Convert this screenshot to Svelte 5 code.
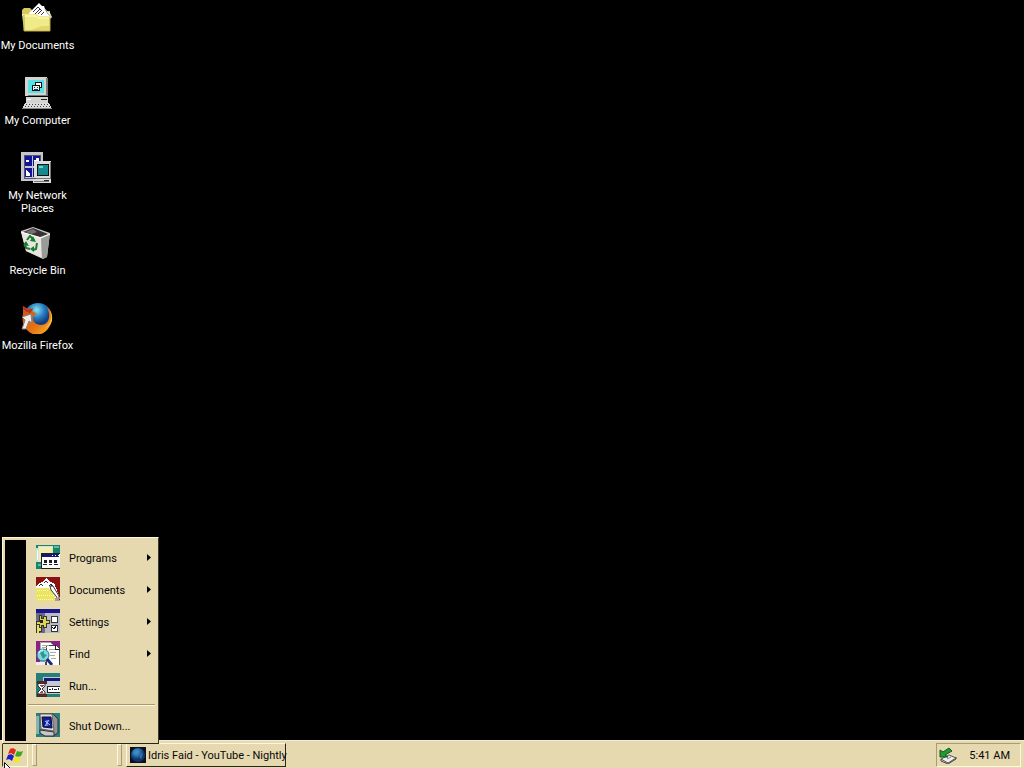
<script>
  const shortcuts = [
    { id: 'docs', lines: ['My Documents'] },
    { id: 'computer', lines: ['My Computer'] },
    { id: 'network', lines: ['My Network', 'Places'] },
    { id: 'bin', lines: ['Recycle Bin'] },
    { id: 'firefox', lines: ['Mozilla Firefox'] }
  ];
  const entries = [
    { id: 'programs', label: 'Programs', sub: true },
    { id: 'documents', label: 'Documents', sub: true },
    { id: 'settings', label: 'Settings', sub: true },
    { id: 'find', label: 'Find', sub: true },
    { id: 'run', label: 'Run...', sub: false },
    { id: 'shutdown', label: 'Shut Down...', sub: false, split: true }
  ];
  let open = $state(true);
</script>

{#snippet desktopIcon(id)}
  <svg class="big" viewBox="0 0 34 32" aria-hidden="true">
    {#if id === 'docs'}
      <path d="M1 12V8l2-2h6l3 3h17v5H1z" fill="#d8c860" />
      <path d="M8 11 18 1l3 3 2 0 1 3 3 3 2 1 2 4-4 4H8z" fill="#fff" />
      <path d="M12 10l5-5 3 3M14 12l5-5M17 12l4-4M20 13l3-3" fill="none" stroke="#334" stroke-width="1" />
      <path d="M24 7l3 5 4 3" fill="none" stroke="#999" />
      <path d="M1 12h15l2 2h11v15H3z" fill="#f0ea88" />
      <path d="M3 14h12l2 2h11" fill="none" stroke="#fffed0" />
      <path d="M3 29V13M3 29h26V15" fill="none" stroke="#b8a84c" />
      <path d="M21 24h7v4H10z" fill="#e4d66a" />
    {:else if id === 'computer'}
      <g shape-rendering="crispEdges">
        <path d="M4 0h22v19H4z" fill="#d4d4ce" /><path d="M25 1h2v18H7v-1h18z" fill="#777" />
        <path d="M7 3h16v13H7z" fill="#57e0e6" />
        <path d="M14 5h7v6h-7z" fill="#fff" /><path d="M14.500 5.500h6v5h-6z" fill="none" stroke="#111" />
        <path d="M11.500 8.500h7v5h-7z" fill="#eee" stroke="#111" />
        <path d="M13 10h1v1h-1zM16 10h1v1h-1zM13 12h4v1h-4z" fill="#173c60" />
        <path d="M5 20h22v6H5z" fill="#d5d5cf" /><path d="M20 22h6v1h-6z" fill="#222" /><path d="M6 22h4v1H6z" fill="#fff" />
        <path d="M4 26h24l3 6H1z" fill="#ddd" />
        <path d="M5 27.500h22M4 29.500h25" stroke="#444" stroke-dasharray="1 2" /><path d="M1 31h30v1H1z" fill="#888" />
      </g>
    {:else if id === 'network'}
      <g shape-rendering="crispEdges">
        <path d="M0 0h22v29H0z" fill="#c7c7cb" /><path d="M3 3h16v23H3z" fill="#c7c7cb" stroke="#556" />
        <path d="M4 4h7v10H4zM12 4h7v10h-7zM4 16h7v9H4zM12 16h7v9h-7z" fill="#10159a" />
        <path d="M5 8h3v2H5zM13 8h2v2h-2zM15 6h3v4h-3zM5 18l4 4v2H5z" fill="#fff" />
        <path d="M13 9h17v17H13z" fill="#ddd" /><path d="M29 10h1v17H15v-1h14z" fill="#777" />
        <path d="M16 12h11v11H16z" fill="#158b91" stroke="#111" /><path d="M18 14h4v2h-4z" fill="#68d5cc" />
        <path d="M12 27h18v4H12z" fill="#ddd" /><path d="M13 29h15" stroke="#777" /><path d="M23 28h5v1h-5z" fill="#222" />
      </g>
    {:else if id === 'bin'}
      <path d="M0 4 12 0l17 6-3 24-4 2-17-8z" fill="#c9c9c5" />
      <path d="M2 5 12 1l15 6-8 3z" fill="#383234" /><path d="M4 5l8-3 4 3-5 2z" fill="#777071" />
      <path d="M0 5l20 6 1 20L5 24z" fill="#e6e5e0" /><path d="M20 11 29 6l-3 24-5 2z" fill="#999b98" />
      <path d="M0 5l20 6 9-4" fill="none" stroke="#fff" />
      <g fill="none" stroke="#187d2b" stroke-width="2"><path d="m6 13 3-4 4 4M4 16l1 5 4 1M16 16l-1 6-3 1" /></g>
      <path d="m12 9 3 6-6-1zM2 18l3-4 3 5zM13 19v6l-4-3z" fill="#187d2b" />
    {:else}
      <defs>
        <radialGradient id="world" cx="45%" cy="25%"><stop offset="0" stop-color="#8ae2f5" /><stop offset=".55" stop-color="#267fc0" /><stop offset="1" stop-color="#123b80" /></radialGradient>
        <linearGradient id="fox" x1="0" y1="0" x2="1" y2="1"><stop offset="0" stop-color="#cf4c12" /><stop offset=".6" stop-color="#e87613" /><stop offset="1" stop-color="#f8bd32" /></linearGradient>
      </defs>
      <circle cx="17" cy="15" r="14" fill="url(#world)" />
      <path d="M2 4l5 3 5-1-1 3 5 3-4 2c-1 5 2 9 8 9 6 0 9-5 8-12l-2-6c5 4 6 9 4 16-3 9-10 13-18 11C4 29 0 21 2 12z" fill="url(#fox)" />
      <path d="M28 7c3 6 3 14-4 19 7-2 10-10 4-19z" fill="#f8bd32" />
      <path d="M2 5l4 4 4-1-2 3" fill="none" stroke="#ad351e" stroke-width="2" />
      <path d="M1 15l9-3 1 9-3-2-3 8H1l3-9z" fill="#f3eee9" stroke="#897d79" />
    {/if}
  </svg>
{/snippet}

{#snippet menuIcon(id)}
  <svg class="mid" viewBox="0 0 24 24" shape-rendering="crispEdges" aria-hidden="true">
    {#if id === 'programs'}
      <path d="M0 0h24v24H0z" fill="#15866d" /><path d="M0 3h6v14H0z" fill="#b8e7cc" /><path d="M1 5h4v10H1z" fill="#fff" />
      <path d="M2 1h14v15H2z" fill="#f1efad" stroke="#ddd" /><path d="M18 2h5M2 20h3" stroke="#65b8a2" stroke-width="2" />
      <path d="M5 8h19v15H5z" fill="#fff" stroke="#222" /><path d="M6 9h17v3H6z" fill="#171778" /><path d="M16 10h1v1h-1zM19 10h1v1h-1zM22 10h1v1h-1z" fill="#fff" />
      <path d="M8 15h3v3H8zM13 15h3v3h-3zM18 15h3v3h-3zM7 19h4v1H7zM13 19h3v1h-3zM18 19h4v1h-4z" fill="#222" />
    {:else if id === 'documents'}
      <path d="M0 0h24v24H0z" fill="#8b1113" /><path d="M0 10 3 6l3-1 4-4 4 4 4 1 6 15-3 3H0z" fill="#fff" />
      <path d="M3 9l2-2 2 2M8 6l2-2 2 2M13 9l2-2 2 3" fill="none" stroke="#333" />
      <path d="M0 11h12l2 2h5v11H0z" fill="#ece564" /><path d="M1 13.500h11M1 18.500h17M2 22.500h15" stroke="#fffbbb" stroke-dasharray="1 1" fill="none" />
      <path d="M14 9h3l6 10v5l-3-5-5-6z" fill="#fff" stroke="#333" shape-rendering="auto" /><path d="M19 21h3l2 3h-5z" fill="#b7998c" />
    {:else if id === 'settings'}
      <path d="M0 0h24v24H0z" fill="#b9bac5" /><path d="M0 0h24v4H0z" fill="#19158a" /><path d="M0 4h9v20H0z" fill="#69698c" />
      <path d="M3 6h2v3h2V7h3v4h3v3h-3v4H7v-2H5v3H3v-4H0v-3h3z" fill="#ddd44c" stroke="#333" />
      <path d="M0 15h3v3h2v4H3v2H0z" fill="#e8df60" stroke="#333" /><path d="M4 11h3v3H4z" fill="#222" />
      <path d="M15 7h6v6h-6zM15 16h6v6h-6z" fill="#fff" stroke="#333" /><path d="M16 18l2 2 3-4" fill="none" stroke="#111" />
    {:else if id === 'find'}
      <path d="M0 0h24v24H0z" fill="#892188" /><path d="M4 1h10l3 3v16H4z" fill="#fff" stroke="#aaa" /><path d="M10 4h10l3 3v17H10z" fill="#fff" stroke="#444" />
      <path d="M6 4h7M6 6h5M13 8h6M14 11h6M14 14h5M15 17h5" stroke="#aaa" /><path d="M19 4v4h4" fill="none" stroke="#222" />
      <path d="M0 21h9v3H0z" fill="#eee" />
      <g shape-rendering="auto"><circle cx="7" cy="14" r="6" fill="#80d6dc" stroke="#237c8b" stroke-width="1" /><path d="M4 12l4-2v3l3 1-4 4z" fill="#2a9794" /><path d="m11 18 5 6" stroke="#172d80" stroke-width="3" /><path d="M3 12c0-2 2-3 4-3" fill="none" stroke="#fff" /></g>
    {:else if id === 'run'}
      <path d="M0 0h24v24H0z" fill="#267e79" /><path d="M7 4h17v17H7z" fill="#c4c8d3" /><path d="M8 5h16v3H8z" fill="#17177c" />
      <path d="M11 13h13v6H11z" fill="#fff" stroke="#222" /><path d="M13 16h2v1h-2zM16 15h1v2h-1zM18 16h3v1h-3zM22 15h1v2h-1z" fill="#222" />
      <path d="M2 10h7v3l-3 3 3 3v2H2v-2l3-3-3-3z" fill="#fff" stroke="#333" shape-rendering="auto" />
      <path d="M1 8h9v2H1zM1 21h9v2H1z" fill="#8b161b" stroke="#333" /><path d="M4 12h4l-2 3zM5 18h2v2H4z" fill="#8b4b49" />
    {:else}
      <path d="M0 0h24v24H0z" fill="#278079" /><path d="M0 3h3v18H0z" fill="#8bb0ad" />
      <g shape-rendering="auto">
        <path d="M4 1h13l5 5v14l-5 3-9-3z" fill="#929298" stroke="#333" />
        <path d="M4 1h12l2 17-13-2z" fill="#ddd" stroke="#666" /><path d="M6 4h9l1 11-9-1z" fill="#111ba4" stroke="#111" />
        <path d="M9 8l5 4M13 7l-4 6M11 7v6" stroke="#a9c9ff" />
        <path d="M4 17l14 2v4H9l-5-3z" fill="#c7c7ce" stroke="#333" />
      </g>
    {/if}
  </svg>
{/snippet}

<main class="screen">
  <nav class="desktop" aria-label="Desktop">
    {#each shortcuts as item}
      <button class="shortcut">
        {@render desktopIcon(item.id)}
        <span class="caption">{#each item.lines as line}<span>{line}</span>{/each}</span>
      </button>
    {/each}
  </nav>

  <footer class="taskbar">
    {#if open}
      <div class="start-menu">
        <div class="stripe"></div>
        <div class="entries" role="menu">
          {#each entries as entry}
            {#if entry.split}<hr />{/if}
            <button class="entry" role="menuitem">
              {@render menuIcon(entry.id)}
              <span class="name">{entry.label}</span>
              {#if entry.sub}<svg class="arrow" viewBox="0 0 4 7" aria-hidden="true"><path d="M0 0v7l4-3.500z" /></svg>{/if}
            </button>
          {/each}
        </div>
      </div>
    {/if}
    <button class="start" class:open aria-label="Start" onclick={() => (open = !open)}>
      <svg viewBox="0 0 18 18" aria-hidden="true">
        <path d="M4 3c2-1 4-1 6 1L8 9C6 7 4 7 2 8z" fill="#df291b" />
        <path d="M11 5c2 1 4 1 6 0l-2 5c-2 1-4 1-6 0z" fill="#39a91d" />
        <path d="M2 9c2-1 4-1 6 1l-2 5c-2-2-4-2-6-1z" fill="#1b20c5" />
        <path d="M9 11c2 1 4 1 6 0l-2 5c-2 1-4 1-6 0z" fill="#eee82c" />
      </svg>
    </button>
    <span class="grip"></span>
    <div class="quick"></div>
    <span class="grip"></span>
    <button class="task">
      <svg viewBox="0 0 16 16" aria-hidden="true">
        <defs><radialGradient id="globe" cx="40%" cy="30%"><stop offset="0" stop-color="#4a9cd4" /><stop offset=".6" stop-color="#2468a6" /><stop offset="1" stop-color="#123468" /></radialGradient></defs>
        <path d="M0 0h16v16H0z" fill="#0b1020" /><circle cx="8" cy="8" r="7" fill="url(#globe)" />
        <path d="M4 4l4-2 1 3-3 3-3-1zM10 8l3-2-1 5-2 1z" fill="#4089be" opacity=".6" />
      </svg>
      <span>Idris Faid - YouTube - Nightly</span>
    </button>
    <div class="tray">
      <svg viewBox="0 0 18 17" aria-hidden="true">
        <path d="M2 12l8-4 7 3-8 5z" fill="#eee" stroke="#555" /><path d="M2 12v2l7 3 8-5v-2" fill="none" stroke="#444" /><path d="M8 12l4-2" stroke="#888" />
        <path d="M1 3v7h8L6 8l7-4-3-3-6 4z" fill="#249b32" stroke="#12571e" />
      </svg>
      <time>5:41 AM</time>
    </div>
    <svg class="pointer" viewBox="0 0 12 19" aria-hidden="true"><path d="M.5.5v16l4-4 3 6 2-1-3-6h5z" fill="#fff" stroke="#111" /></svg>
  </footer>
</main>

<style>
  :global(body) { margin: 0; background: #000; }
  .screen {
    display: flex; flex-direction: column; height: 100vh; overflow: hidden;
    background: #000; color: #080808; font: 11px/13px Roboto, "Liberation Sans", Arial, sans-serif;
  }
  button { font: inherit; color: inherit; border: 0; padding: 0; margin: 0; background: none; }
  svg { display: block; flex: none; }
  .desktop { flex: 1; display: flex; flex-direction: column; align-items: flex-start; min-height: 0; }
  .shortcut {
    display: flex; flex-direction: column; align-items: center; justify-content: flex-start; gap: 5px;
    width: 75px; height: 75px; flex: none; padding-top: 2px; color: #fff;
  }
  .big { width: 34px; height: 32px; }
  .caption { display: flex; flex-direction: column; align-items: center; white-space: nowrap; }
  .taskbar {
    position: relative; flex: none; display: flex; align-items: stretch; gap: 4px;
    height: 24px; padding: 2px 3px 1px 2px; background: #e6d9b0; border-top: 1px solid #f4ecd0;
  }
  .start {
    display: flex; align-items: center; justify-content: center; width: 26px;
    border: 1px solid; border-color: #fff8dc #3d3828 #3d3828 #fff8dc;
  }
  .start.open { border-color: #3d3828 #fff8dc #fff8dc #3d3828; }
  .start svg { width: 18px; height: 18px; }
  .grip { width: 3px; margin: 1px 0; border: 1px solid; border-color: #fff8dc #a89a70 #a89a70 #fff8dc; }
  .quick { width: 72px; }
  .task {
    display: flex; align-items: center; gap: 2px; width: 160px; padding-left: 3px; white-space: nowrap;
    border: 1px solid; border-color: #fff8dc #29251b #29251b #fff8dc;
  }
  .task svg { width: 16px; height: 16px; }
  .tray {
    display: flex; align-items: center; justify-content: space-between; width: 85px; box-sizing: border-box;
    margin-left: auto; padding: 0 10px 0 2px; border: 1px solid; border-color: #aa9c72 #fff8dc #fff8dc #aa9c72;
  }
  .tray svg { width: 18px; height: 17px; }
  .start-menu {
    position: absolute; left: 2px; bottom: 24px; z-index: 2; display: flex; box-sizing: border-box;
    width: 157px; padding: 2px 3px 2px 2px; background: #e6d9b0;
    border: 1px solid; border-color: #fff8dc #3d3828 #29251b #fff8dc;
  }
  .stripe { width: 21px; background: #000; }
  .entries { flex: 1; display: flex; flex-direction: column; padding: 1px 0 0 2px; }
  .entry { display: flex; align-items: center; gap: 9px; height: 32px; padding: 0 4px 0 8px; text-align: left; }
  .mid { width: 24px; height: 24px; }
  .name { flex: 1; padding-top: 2px; white-space: nowrap; }
  .arrow { width: 4px; height: 7px; }
  hr { height: 0; width: 100%; margin: 3px 0; border: 0; border-top: 1px solid #a89a70; border-bottom: 1px solid #fff8dc; }
  .pointer { position: absolute; left: 4px; top: 21px; width: 12px; height: 19px; z-index: 3; }
</style>
